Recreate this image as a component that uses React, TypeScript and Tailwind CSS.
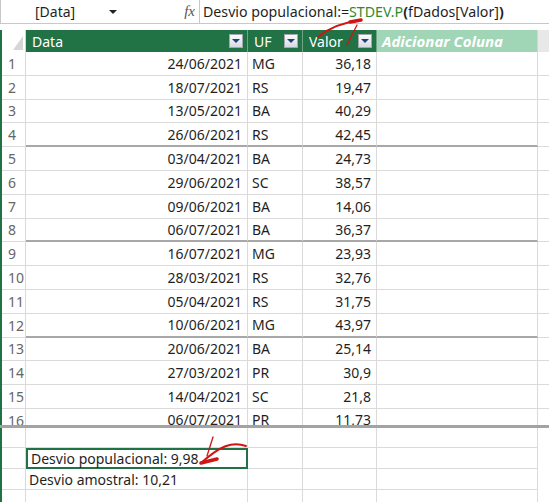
const rows: [string, string, string][] = [
  ["24/06/2021", "MG", "36,18"],
  ["18/07/2021", "RS", "19,47"],
  ["13/05/2021", "BA", "40,29"],
  ["26/06/2021", "RS", "42,45"],
  ["03/04/2021", "BA", "24,73"],
  ["29/06/2021", "SC", "38,57"],
  ["09/06/2021", "BA", "14,06"],
  ["06/07/2021", "BA", "36,37"],
  ["16/07/2021", "MG", "23,93"],
  ["28/03/2021", "RS", "32,76"],
  ["05/04/2021", "RS", "31,75"],
  ["10/06/2021", "MG", "43,97"],
  ["20/06/2021", "BA", "25,14"],
  ["27/03/2021", "PR", "30,9"],
  ["14/04/2021", "SC", "21,8"],
  ["06/07/2021", "PR", "11,73"],
];

const FilterButton = () => (
  <span className="w-[14px] h-[14px] border border-[#a3a8b0] bg-linear-to-b from-[#fbfbfb] to-[#d6dbe2] flex items-center justify-center">
    <span className="w-0 h-0 border-l-[4px] border-r-[4px] border-t-[4px] border-l-transparent border-r-transparent border-t-[#23407e]" />
  </span>
);

const HeaderCell = ({ label, width }: { label: string; width: string }) => (
  <div className={`${width} h-full bg-[#217346] border-r border-[#6fa487] flex items-center justify-between pl-[6px] pr-[4px] text-white`}>
    <span>{label}</span>
    <FilterButton />
  </div>
);

export default function App() {
  return (
    <div
      className="relative w-[549px] h-[502px] overflow-hidden bg-white text-[14px] text-[#1f1f1f]"
      style={{ fontFamily: '"Noto Sans", "Open Sans", sans-serif' }}
    >
      {/* Formula bar */}
      <div className="h-[24px] flex items-center border-b border-l border-[#c8c8c8]">
        <div className="w-[130px] h-full flex items-center pl-[34px] pr-[14px] justify-between">
          <span>[Data]</span>
          <span className="w-0 h-0 border-l-[4px] border-r-[4px] border-t-[4px] border-l-transparent border-r-transparent border-t-[#222]" />
        </div>
        <div className="w-[69px] h-full flex items-center justify-end pr-[4px] border-r border-[#c8c8c8]">
          <span className="italic text-[#555] text-[15px]" style={{ fontFamily: '"Liberation Serif", serif' }}>
            fx
          </span>
        </div>
        <div className="pl-[3px] whitespace-nowrap text-[14.2px]">
          <span>Desvio populacional:=</span>
          <span className="text-[#2e8b2e]">STDEV.P</span>
          <span className="font-bold">(</span>
          <span>fDados[Valor]</span>
          <span className="font-bold">)</span>
        </div>
      </div>

      <div className="h-[6px]" />

      {/* Upper pane */}
      <div className="h-[395px] overflow-hidden border-l-2 border-[#217346]">
        <div className="h-[22px] flex">
          <div className="w-[24px] h-full border-r border-[#d4d4d4] flex items-end justify-end pr-[2px] pb-[2px]">
            <span className="w-0 h-0 border-b-[14px] border-l-[10px] border-l-transparent border-b-[#d6d6d6]" />
          </div>
          <HeaderCell label="Data" width="w-[222px]" />
          <HeaderCell label="UF" width="w-[55px]" />
          <HeaderCell label="Valor" width="w-[74px]" />
          <div className="w-[161px] h-full bg-[#a0d5b5] border-r border-[#d4d4d4] flex items-center pl-[5px] text-white font-bold italic text-[15px] whitespace-nowrap">
            Adicionar Coluna
          </div>
          <div className="flex-1 h-full bg-[#e8e8e8]" />
        </div>

        {rows.map(([date, uf, valor], i) => {
          const groupEnd = i % 4 === 3;
          const line = groupEnd ? "border-b-2 border-b-[#a8a8a8]" : "border-b border-b-[#dadada]";
          return (
            <div key={i} className="h-[23.8px] flex">
              <div className="w-[24px] h-full border-r border-b border-[#dadada] flex items-center pl-[6px] text-[#666]">
                {i + 1}
              </div>
              <div className={`w-[222px] h-full border-r border-r-[#dadada] ${line} flex items-center justify-end pr-[5px]`}>
                {date}
              </div>
              <div className={`w-[55px] h-full border-r border-r-[#dadada] ${line} flex items-center pl-[4px]`}>
                {uf}
              </div>
              <div className={`w-[74px] h-full border-r border-r-[#dadada] ${line} flex items-center justify-end pr-[5px]`}>
                {valor}
              </div>
              <div className={`w-[161px] h-full border-r border-r-[#dadada] ${line}`} />
              <div className="flex-1 h-full border-b border-[#dadada]" />
            </div>
          );
        })}
      </div>

      {/* Split bar */}
      <div className="h-[3px] bg-[#a3a3a3]" />

      {/* Lower pane */}
      <div className="border-l-2 border-[#217346] h-[80px]">
        {["", "Desvio populacional: 9,98", "Desvio amostral: 10,21", ""].map((text, i) => (
          <div key={i} className={`${i === 0 ? "h-[20px]" : "h-[21px]"} flex`}>
            <div className="w-[24px] h-full border-r border-b border-[#dadada]" />
            <div
              className={`w-[222px] h-full flex items-center pl-[3px] whitespace-nowrap ${
                i === 1 ? "border-2 border-[#217346]" : "border-r border-b border-[#dadada]"
              }`}
            >
              {text}
            </div>
            <div className="w-[55px] h-full border-r border-b border-[#dadada]" />
            <div className="w-[74px] h-full border-r border-b border-[#dadada]" />
            <div className="w-[161px] h-full border-r border-b border-[#dadada]" />
          </div>
        ))}
      </div>

      {/* Annotation arrows */}
      <svg className="absolute inset-0 pointer-events-none" width="549" height="502">
        <g fill="none" stroke="#d11414" strokeLinecap="round" strokeLinejoin="round">
          <path d="M318 37 C 330 27, 345 22, 361 20" strokeWidth="2" />
          <path d="M361 20 L 350 22" strokeWidth="3.5" />
          <path d="M357 25 L 347 45" strokeWidth="1.3" />
          <path d="M246 446 C 232 441, 220 446, 201 463" strokeWidth="2" />
          <path d="M201 463 L 217 459" strokeWidth="3.5" />
          <path d="M213 437 L 207 456" strokeWidth="1.3" />
        </g>
      </svg>
    </div>
  );
}
